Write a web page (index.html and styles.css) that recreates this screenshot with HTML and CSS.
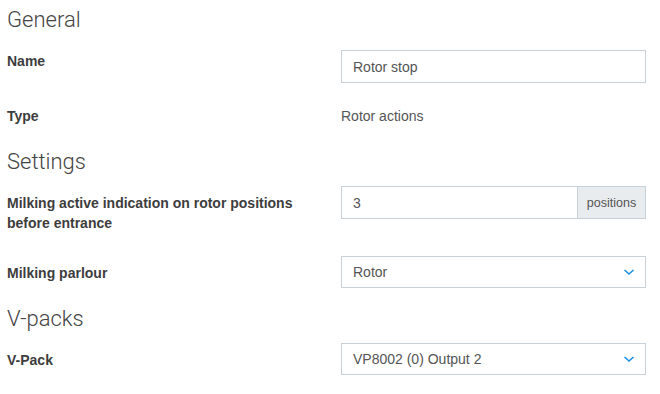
FILE: index.html
```html
<!DOCTYPE html>
<html lang="en">
<head>
    <meta charset="UTF-8">
    <meta name="viewport" content="width=device-width, initial-scale=1.0">
    <title>Rotor stop</title>
    <link rel="stylesheet" href="styles.css">
</head>
<body>
    <div class="form">
        <h2 class="section-title">General</h2>
        <div class="form-row">
            <label class="form-label">Name</label>
            <div class="control-wrap control-wrap-offset">
                <input class="form-control" type="text" value="Rotor stop">
            </div>
        </div>
        <div class="form-row">
            <label class="form-label">Type</label>
            <div class="plain-value">Rotor actions</div>
        </div>

        <h2 class="section-title">Settings</h2>
        <div class="form-row">
            <label class="form-label">Milking active indication on rotor positions before entrance</label>
            <div class="input-group">
                <input class="form-control" type="text" value="3">
                <span class="input-addon">positions</span>
            </div>
        </div>
        <div class="form-row">
            <label class="form-label">Milking parlour</label>
            <div class="select">
                <span class="select-value">Rotor</span>
                <svg class="chevron" width="12" height="8" viewBox="0 0 12 8"><path d="M1.5 2 L6 6 L10.5 2" fill="none" stroke="#1e8fe1" stroke-width="1.6"/></svg>
            </div>
        </div>

        <h2 class="section-title">V-packs</h2>
        <div class="form-row">
            <label class="form-label">V-Pack</label>
            <div class="select">
                <span class="select-value">VP8002 (0) Output 2</span>
                <svg class="chevron" width="12" height="8" viewBox="0 0 12 8"><path d="M1.5 2 L6 6 L10.5 2" fill="none" stroke="#1e8fe1" stroke-width="1.6"/></svg>
            </div>
        </div>
    </div>
</body>
</html>
```

FILE: styles.css
```css
body {
    font-family: 'Liberation Sans', Arial, sans-serif;
    margin: 0;
    padding: 8px 14px 0 7px;
    background: #fff;
    color: #333;
}
.section-title {
    font-family: Roboto, 'Liberation Sans', sans-serif;
    font-size: 22px;
    font-weight: 300;
    line-height: 24px;
    color: #444;
    margin: 0 0 12px 0;
}
.form-row + .section-title {
    padding-top: 1px;
}
.form-row {
    display: grid;
    grid-template-columns: 1fr 305px;
    column-gap: 15px;
    margin-bottom: 16px;
}
.form-label {
    font-size: 14px;
    font-weight: bold;
    line-height: 20px;
    color: #3d3d3d;
    padding: 7px 0;
}
.control-wrap-offset {
    padding-top: 6px;
}
.form-control {
    box-sizing: border-box;
    width: 100%;
    height: 33px;
    border: 1px solid #c9d1d8;
    padding: 0 11px;
    font-family: inherit;
    font-size: 14px;
    color: #555;
    background: #fff;
    outline: none;
    margin: 0;
}
.plain-value {
    font-size: 14px;
    line-height: 20px;
    color: #555;
    padding: 7px 0;
}
.input-group {
    display: flex;
    height: 33px;
}
.input-group .form-control {
    flex: 1;
    height: 33px;
}
.input-addon {
    display: flex;
    align-items: center;
    box-sizing: border-box;
    width: 68px;
    justify-content: center;
    background: #e9ecef;
    border: 1px solid #c9d1d8;
    border-left: none;
    font-size: 12.5px;
    color: #555;
}
.select {
    box-sizing: border-box;
    display: flex;
    align-items: center;
    justify-content: space-between;
    height: 32px;
    border: 1px solid #c9d1d8;
    padding: 0 10px 0 11px;
    font-size: 14px;
    color: #555;
}
.chevron {
    display: block;
}
```
